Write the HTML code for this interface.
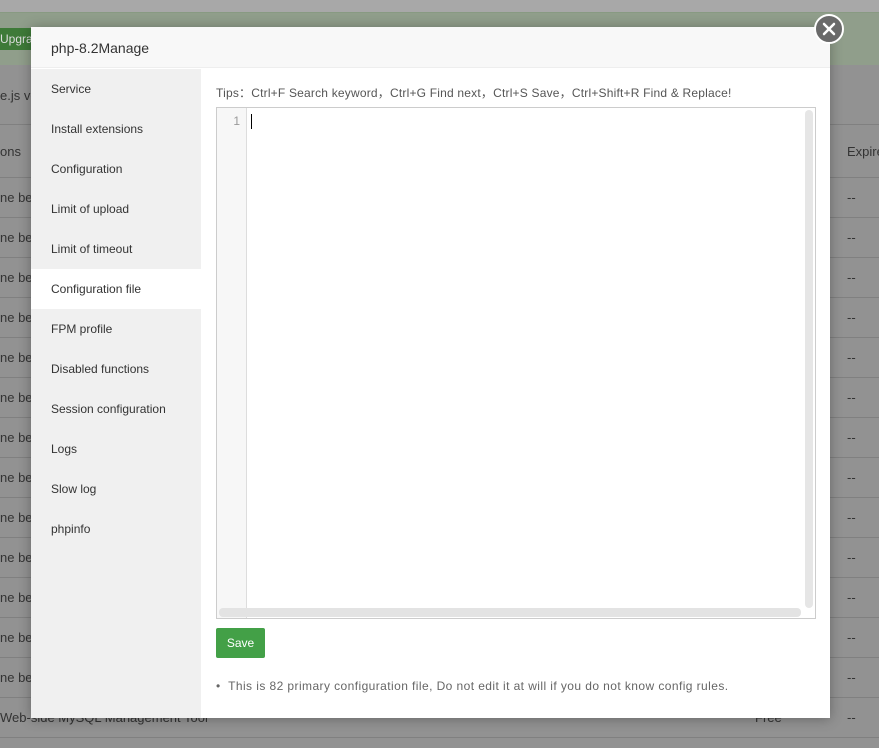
<!DOCTYPE html>
<html><head><style>
*{margin:0;padding:0;box-sizing:border-box}
body{width:879px;height:748px;overflow:hidden;background:#929292;font-family:"Liberation Sans",sans-serif;position:relative;font-size:13px;color:#333}
.top{position:absolute;left:0;top:0;width:879px;height:12px;background:#a8a8a8}
.green{position:absolute;left:0;top:12px;width:879px;height:53px;background:#909e8b;border-top:1px solid #889a82}
.upg{position:absolute;left:0;top:28px;width:40px;height:22px;background:#3e7a38;color:#ddd;font-size:12px;line-height:22px}
.row{position:absolute;left:0;width:879px;border-top:1px solid #808080;color:#333;font-size:13px}
.modal{position:absolute;left:31px;top:27px;width:799px;height:691px;background:#fff;box-shadow:0 1px 12px rgba(0,0,0,.3)}
.hd{height:41px;background:#f8f8f8;border-bottom:1px solid #eee;padding-left:20px;line-height:42px;font-size:14px;color:#333}
.side{position:absolute;left:0;top:42px;width:170px;bottom:0;background:#f0f0f0}
.side div{height:40px;line-height:40px;padding-left:20px;font-size:12px;color:#333}
.side .act{background:#fff}
.close{position:absolute;left:814px;top:14px;width:30px;height:30px;border-radius:50%;background:#6a6a6a;border:2px solid #fff}
.tips{position:absolute;left:185px;top:57px;font-size:12px;color:#555;letter-spacing:0.2px}
.ed{position:absolute;left:185px;top:80px;width:600px;height:512px;border:1px solid #ccc;background:#fff}
.gut{position:absolute;left:0;top:0;width:30px;height:100%;background:#f7f7f7;border-right:1px solid #ddd;text-align:right;padding-right:6px;padding-top:6px;font-size:12px;color:#999}
.cur{position:absolute;left:34px;top:6px;width:1px;height:15px;background:#000}
.vs{position:absolute;right:2px;top:2px;width:8px;height:498px;background:#e6e6e6;border-radius:4px}
.hs{position:absolute;left:2px;bottom:1px;width:582px;height:9px;background:#e3e3e3;border-radius:4px}
.save{position:absolute;left:185px;top:601px;width:49px;height:30px;background:#43a047;color:#fff;border-radius:2px;font-size:12px;line-height:30px;text-align:center}
.note{position:absolute;left:185px;top:652px;font-size:12px;color:#666;letter-spacing:0.42px}
</style></head><body>
<div class="top"></div>
<div class="green"></div>
<div class="upg">Upgrad</div>
<div style="position:absolute;left:0;top:88px;font-size:13px">e.js ve</div>
<div class="row" style="top:124px;height:53px;line-height:53px">ons<span style="position:absolute;left:847px">Expire</span></div>
<div class="row" style="top:177px;line-height:40px">ne bes<span style="position:absolute;left:847px">--</span></div>
<div class="row" style="top:217px;line-height:40px">ne bes<span style="position:absolute;left:847px">--</span></div>
<div class="row" style="top:257px;line-height:40px">ne bes<span style="position:absolute;left:847px">--</span></div>
<div class="row" style="top:297px;line-height:40px">ne bes<span style="position:absolute;left:847px">--</span></div>
<div class="row" style="top:337px;line-height:40px">ne bes<span style="position:absolute;left:847px">--</span></div>
<div class="row" style="top:377px;line-height:40px">ne bes<span style="position:absolute;left:847px">--</span></div>
<div class="row" style="top:417px;line-height:40px">ne bes<span style="position:absolute;left:847px">--</span></div>
<div class="row" style="top:457px;line-height:40px">ne bes<span style="position:absolute;left:847px">--</span></div>
<div class="row" style="top:497px;line-height:40px">ne bes<span style="position:absolute;left:847px">--</span></div>
<div class="row" style="top:537px;line-height:40px">ne bes<span style="position:absolute;left:847px">--</span></div>
<div class="row" style="top:577px;line-height:40px">ne bes<span style="position:absolute;left:847px">--</span></div>
<div class="row" style="top:617px;line-height:40px">ne bes<span style="position:absolute;left:847px">--</span></div>
<div class="row" style="top:657px;line-height:40px">ne bes<span style="position:absolute;left:847px">--</span></div>
<div class="row" style="top:697px;line-height:40px">Web-side MySQL Management Tool<span style="position:absolute;left:755px">Free</span><span style="position:absolute;left:847px">--</span></div>
<div class="row" style="top:737px;height:11px"></div>
<div class="modal">
<div class="hd">php-8.2Manage</div>
<div class="side">
<div>Service</div><div>Install extensions</div><div>Configuration</div><div>Limit of upload</div><div>Limit of timeout</div><div class="act">Configuration file</div><div>FPM profile</div><div>Disabled functions</div><div>Session configuration</div><div>Logs</div><div>Slow log</div><div>phpinfo</div>
</div>
<div class="tips">Tips：Ctrl+F Search keyword，Ctrl+G Find next，Ctrl+S Save，Ctrl+Shift+R Find &amp; Replace!</div>
<div class="ed"><div class="gut">1</div><div class="cur"></div><div class="vs"></div><div class="hs"></div></div>
<div class="save">Save</div>
<div class="note">•&nbsp;&nbsp;This is 82 primary configuration file, Do not edit it at will if you do not know config rules.</div>
</div>
<div class="close"><svg width="26" height="26" viewBox="0 0 26 26"><path d="M8 8L18 18M18 8L8 18" stroke="#fff" stroke-width="2.5" stroke-linecap="round"/></svg></div>
</body></html>
